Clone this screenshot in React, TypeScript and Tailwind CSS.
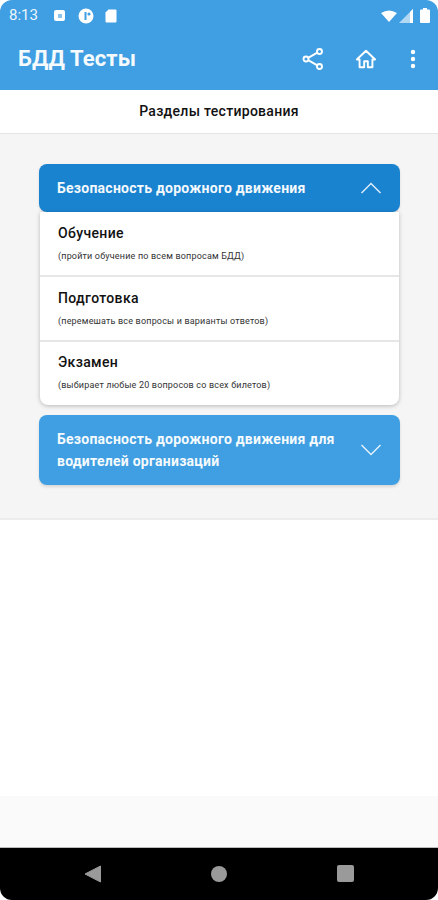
import React from "react";

function Row({ title, sub, last }: { title: string; sub: string; last?: boolean }) {
  return (
    <div className={`pl-[18px] ${last ? "h-[63px] pt-[11px]" : "h-[65px] pt-[12px] border-b-2 border-[#e6e6e6]"}`}>
      <div className="text-[14px] leading-[18px] font-medium tracking-[0.35px] text-[#111]">{title}</div>
      <div className="mt-[8px] text-[9px] leading-[12px] text-[#333] tracking-[0.18px]">{sub}</div>
    </div>
  );
}

export default function App() {
  return (
    <div className="relative h-[900px] w-[438px] overflow-hidden bg-white flex flex-col font-['Roboto',sans-serif]">
      {/* Status + app bar */}
      <div className="h-[90px] shrink-0 bg-[#3f9fe2] text-white flex flex-col rounded-t-[12px]">
        <div className="h-[30px] flex items-center pl-[9px] pr-[8px] pt-[1px]">
          <span className="text-[15px] w-[33px] opacity-90">8:13</span>
          <div className="ml-[12px] w-[11px] h-[11px] rounded-[2px] bg-white flex items-center justify-center">
            <div className="w-[4px] h-[4px] bg-[#8dc4ee]" />
          </div>
          <svg className="ml-[13px]" width="16" height="16" viewBox="0 0 16 16">
            <circle cx="8" cy="8" r="7.5" fill="#fff" />
            <rect x="6.5" y="4" width="2" height="8" fill="#3f9fe2" />
            <circle cx="11" cy="6" r="1.6" fill="#3f9fe2" />
          </svg>
          <svg className="ml-[11px]" width="12" height="14" viewBox="0 0 12 14">
            <path d="M3.5 0.5H10.5A1 1 0 0 1 11.5 1.5V12.5A1 1 0 0 1 10.5 13.5H1.5A1 1 0 0 1 .5 12.5V3.5Z" fill="#fff" />
          </svg>
          <div className="flex-1" />
          <svg width="16" height="12" viewBox="0 0 16 12">
            <path d="M0 3Q8 -2 16 3L8 12Z" fill="#fff" />
          </svg>
          <svg className="ml-[2px]" width="14" height="14" viewBox="0 0 14 14">
            <path d="M14 0V14H0Z" fill="#fff" opacity="0.6" />
            <path d="M14 0V14H11V3Z" fill="#fff" />
          </svg>
          <svg className="ml-[7px]" width="10" height="15" viewBox="0 0 10 15">
            <path d="M3 0H7V1.500H9A1 1 0 0 1 10 2.500V14A1 1 0 0 1 9 15H1A1 1 0 0 1 0 14V2.500A1 1 0 0 1 1 1.500H3Z" fill="#fff" />
          </svg>
        </div>
        <div className="flex-1 flex items-center pl-[18px] pb-[3px]">
          <span className="text-[22px] font-bold tracking-[0.1px] opacity-95">БДД Тесты</span>
          <div className="flex-1" />
          <svg width="22" height="24" viewBox="0 0 22 24" fill="none" stroke="#fff" strokeWidth="1.9" className="mr-[31px]">
            <circle cx="17.500" cy="4.500" r="2.500" />
            <circle cx="4" cy="12" r="2.500" />
            <circle cx="17.500" cy="19.500" r="2.500" />
            <path d="M6.200 10.800 15.300 5.700M6.200 13.200 15.300 18.300" />
          </svg>
          <svg width="22" height="22" viewBox="0 0 24 24" fill="none" stroke="#fff" strokeWidth="2.100" strokeLinejoin="round" className="mr-[33px]">
            <path d="M2 12.500 12 3l10 9.500h-3V21h-5v-6.500h-4V21H5v-8.500Z" />
          </svg>
          <svg width="6" height="20" viewBox="0 0 6 20" fill="#fff" className="mr-[22px]">
            <circle cx="3" cy="3" r="2.200" />
            <circle cx="3" cy="10" r="2.200" />
            <circle cx="3" cy="17" r="2.200" />
          </svg>
        </div>
      </div>

      {/* Subheader */}
      <div className="h-[44px] shrink-0 bg-white border-b border-[#e4e4e4] flex items-center justify-center">
        <span className="text-[14px] font-medium tracking-[0.3px] text-[#111] -mt-[1px]">Разделы тестирования</span>
      </div>

      {/* Section */}
      <div className="h-[386px] shrink-0 bg-[#f5f5f5] border-b-2 border-[#ececec] px-[40px] pt-[30px]">
        <div className="h-[48px] -ml-[1px] w-[361px] rounded-[8px] bg-[#1a83d0] text-white flex items-center px-[18px] shadow-sm">
          <span className="flex-1 text-[14px] font-bold tracking-[0.25px] opacity-95">Безопасность дорожного движения</span>
          <svg width="22" height="12" viewBox="0 0 22 12" fill="none" stroke="#fff" strokeWidth="1.500" className="opacity-85">
            <path d="M1.500 11 11 1.500 20.500 11" />
          </svg>
        </div>
        <div className="w-[359px] h-[193px] bg-white rounded-b-[8px] shadow-[0_1px_4px_rgba(0,0,0,0.25)]">
          <Row title="Обучение" sub="(пройти обучение по всем вопросам БДД)" />
          <Row title="Подготовка" sub="(перемешать все вопросы и варианты ответов)" />
          <Row title="Экзамен" sub="(выбирает любые 20 вопросов со всех билетов)" last />
        </div>
        <div className="mt-[10px] -ml-[1px] w-[361px] h-[70px] rounded-[8px] bg-[#3f9fe2] text-white flex items-center px-[18px] shadow-[0_2px_3px_rgba(0,0,0,0.12)]">
          <span className="flex-1 text-[14px] font-bold leading-[22px] tracking-[0.25px] opacity-95">
            Безопасность дорожного движения для
            <br />
            водителей организаций
          </span>
          <svg width="22" height="12" viewBox="0 0 22 12" fill="none" stroke="#fff" strokeWidth="1.500" className="opacity-85">
            <path d="M1.500 1 11 10.500 20.500 1" />
          </svg>
        </div>
      </div>

      {/* Blank */}
      <div className="flex-1 bg-white" />
      <div className="h-[51px] shrink-0 bg-[#fafafa]" />

      {/* Navigation bar */}
      <div className="h-[53px] shrink-0 bg-black border-t border-[#bbb] rounded-b-[12px] flex items-center justify-center pb-[1px]">
        <div className="w-[270px] flex items-center justify-between">
          <svg width="17" height="18" viewBox="0 0 17 18">
            <path d="M16.500 1V17L1 9Z" fill="#9a9a9a" stroke="#9a9a9a" strokeLinejoin="round" />
          </svg>
          <div className="w-[16px] h-[16px] rounded-full bg-[#9a9a9a]" />
          <div className="w-[17px] h-[17px] rounded-[2px] bg-[#9a9a9a]" />
        </div>
      </div>
    </div>
  );
}
